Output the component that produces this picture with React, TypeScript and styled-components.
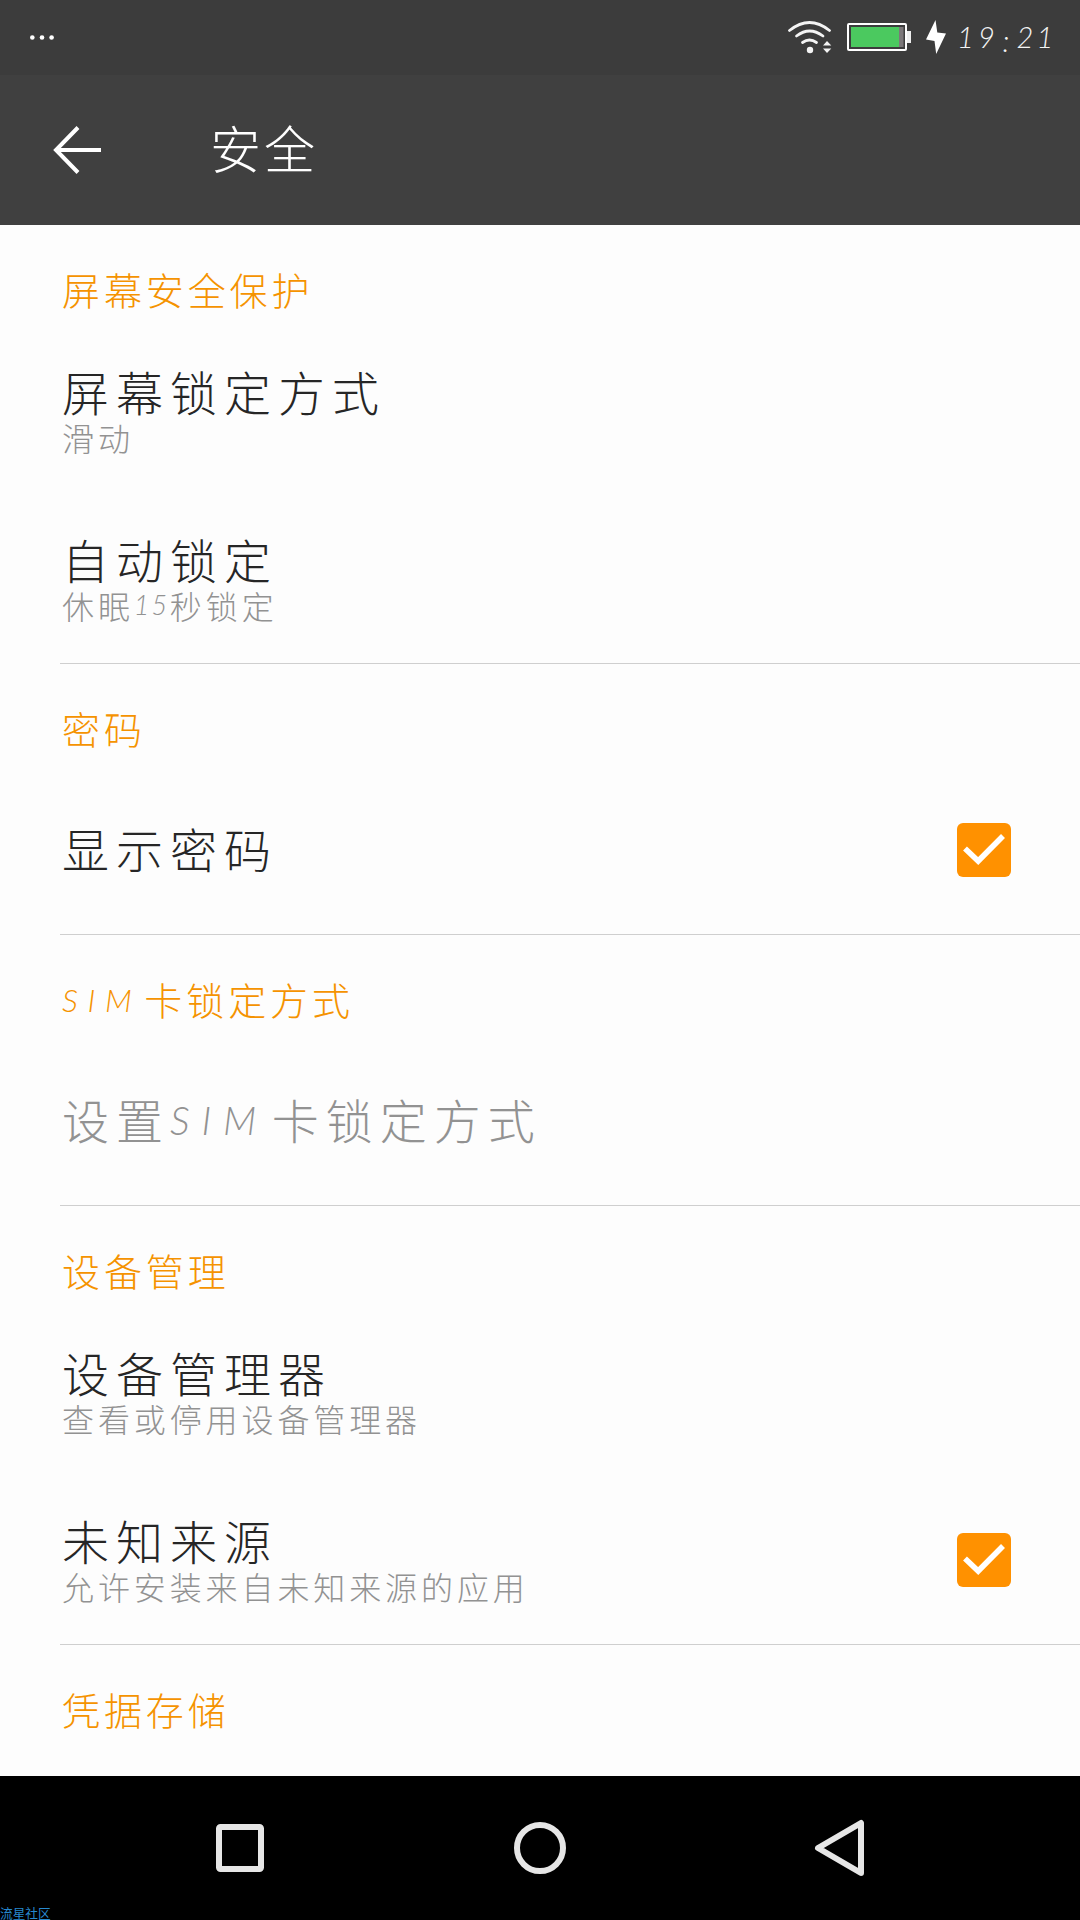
import React from "react";
import styled, { createGlobalStyle } from "styled-components";

const GlobalStyle = createGlobalStyle`
  * { box-sizing: border-box; }
  body { margin: 0; background: #fdfdfd; }
`;

const Screen = styled.div`
  position: relative;
  display: flex;
  flex-direction: column;
  width: 1080px;
  height: 1920px;
  overflow: hidden;
  background: #fdfdfd;
  font-family: Lato, "Noto Sans CJK SC", sans-serif;
  font-weight: 300;
  white-space: nowrap;
`;

const StatusBar = styled.header`
  display: flex;
  align-items: center;
  justify-content: space-between;
  height: 75px;
  flex: none;
  padding: 0 25px 2px 28px;
  background: #3c3c3c;
`;

const StatusIcons = styled.div`
  display: flex;
  align-items: center;
`;

const Clock = styled.div`
  display: flex;
  width: 103px;
  padding-left: 3px;
  font: italic 300 29px/34px Lato, sans-serif;
  color: #f4f4f4;
`;

const Digit = styled.span<{ $width: number; $drop?: number }>`
  width: ${(p) => p.$width}px;
  padding-top: ${(p) => p.$drop ?? 0}px;
  height: 34px;
  text-align: center;
`;

const Toolbar = styled.div`
  display: flex;
  align-items: center;
  height: 150px;
  flex: none;
  padding-left: 53px;
  gap: 109px;
  background: #404040;
`;

const PageTitle = styled.h1`
  margin: 0;
  font-size: 51px;
  font-weight: 300;
  line-height: 60px;
  letter-spacing: 3px;
  color: #fff;
`;

const Content = styled.main`
  flex: 1;
  min-height: 0;
  overflow: hidden;
`;

const Section = styled.section`
  margin-left: 60px;
  border-bottom: 1px solid #cfcfcf;

  &:last-child {
    border-bottom: none;
  }
`;

const SectionTitle = styled.h2`
  height: 102px;
  margin: 0;
  padding: 40px 0 0 2px;
  font-size: 38px;
  font-weight: 300;
  line-height: 50px;
  letter-spacing: 3.9px;
  color: #f59300;
`;

const Item = styled.div`
  display: flex;
  align-items: center;
  justify-content: space-between;
  height: 168px;
  padding: 0 69px 0 2px;
`;

const ItemTitle = styled.div<{ $disabled?: boolean }>`
  font-size: 47px;
  line-height: 56px;
  letter-spacing: 7px;
  color: ${(p) => (p.$disabled ? "#929292" : "#262626")};
`;

const Summary = styled.div`
  font-size: 32px;
  line-height: 36px;
  letter-spacing: 3.9px;
  color: #929292;
`;

const Latin = styled.span<{ $em: number; $tracking: number; $rise: number }>`
  display: inline-block;
  width: ${(p) => p.$em}em;
  font-size: 0.84em;
  font-style: italic;
  line-height: 1;
  letter-spacing: ${(p) => p.$tracking}em;
  vertical-align: ${(p) => p.$rise}em;
`;

const Checkbox = styled.span`
  display: flex;
  width: 54px;
  height: 54px;
  border-radius: 6px;
  background: #ff9100;
`;

const NavBar = styled.nav`
  display: flex;
  align-items: center;
  justify-content: center;
  gap: 240px;
  height: 144px;
  flex: none;
  background: #000;
`;

const Watermark = styled.div`
  position: absolute;
  left: 0;
  bottom: 0;
  font: 400 12.7px/14px "Noto Sans CJK SC", sans-serif;
  color: #2789cf;
`;

const Check = () => (
  <Checkbox>
    <svg width="54" height="54" viewBox="0 0 54 54">
      <path d="M8 25.5 L21.2 38 L46 13" fill="none" stroke="#fff" strokeWidth="5.6" />
    </svg>
  </Checkbox>
);

type Entry = { title: string; summary?: string; disabled?: boolean; checked?: boolean };
type Group = { name: string; items: Entry[] };

const groups: Group[] = [
  {
    name: "屏幕安全保护",
    items: [
      { title: "屏幕锁定方式", summary: "滑动" },
      { title: "自动锁定", summary: "休眠15秒锁定" },
    ],
  },
  { name: "密码", items: [{ title: "显示密码", checked: true }] },
  { name: "SIM卡锁定方式", items: [{ title: "设置SIM卡锁定方式", disabled: true }] },
  {
    name: "设备管理",
    items: [
      { title: "设备管理器", summary: "查看或停用设备管理器" },
      { title: "未知来源", summary: "允许安装来自未知来源的应用", checked: true },
    ],
  },
  { name: "凭据存储", items: [] },
];

/* Sets Latin runs in italics between the Chinese characters. */
const Mixed = ({ text }: { text: string }) => (
  <>
    {text.split(/(SIM|15)/).map((part, i) => {
      if (part === "SIM") {
        return (
          <Latin key={i} $em={2.58} $tracking={0.3} $rise={0.1}>
            {part}
          </Latin>
        );
      }
      if (part === "15") {
        return (
          <Latin key={i} $em={1.34} $tracking={0.08} $rise={0.16}>
            {part}
          </Latin>
        );
      }
      return part;
    })}
  </>
);

export default function App() {
  return (
    <Screen>
      <GlobalStyle />
      <StatusBar>
        <svg width="28" height="8" viewBox="0 0 28 8" fill="#fff">
          <circle cx="4.3" cy="4.5" r="2.3" />
          <circle cx="14" cy="4.5" r="2.3" />
          <circle cx="23.6" cy="4.5" r="2.3" />
        </svg>
        <StatusIcons>
          <svg width="165" height="40" viewBox="787 17 165 40">
            <g fill="none" stroke="#f4f4f4" strokeWidth="2.8" strokeLinecap="round">
              <path d="M789.5 30.5 Q809.5 14.5 829.5 30.5" />
              <path d="M796.5 36 Q809.5 26 823 36" />
              <path d="M802.5 42.5 Q809.5 37.5 816.5 42.5" />
            </g>
            <circle cx="810" cy="50" r="3.2" fill="#f4f4f4" />
            <path d="M823 45.5 L827 41 L831.3 45.5 Z M823 48.5 L827 53 L831.3 48.5 Z" fill="#f4f4f4" />
            <rect x="848" y="24" width="58" height="26" rx="1" fill="none" stroke="#fff" strokeWidth="2" />
            <rect x="851" y="27" width="48" height="20" fill="#4bc95f" />
            <rect x="899" y="27" width="4.5" height="20" fill="#7b7779" />
            <rect x="907" y="31" width="4" height="12" fill="#eee" />
            <path d="M935.5 20 L926 39.5 L934.5 41 L936.2 54 L946 33.5 L937.3 32.5 Z" fill="#fff" />
          </svg>
          <Clock>
            <Digit $width={21}>1</Digit>
            <Digit $width={21}>9</Digit>
            <Digit $width={18} $drop={4}>:</Digit>
            <Digit $width={20}>2</Digit>
            <Digit $width={20}>1</Digit>
          </Clock>
        </StatusIcons>
      </StatusBar>
      <Toolbar>
        <svg width="48" height="50" viewBox="0 0 48 50">
          <path d="M25 2.5 L3 25 L25 47.5 M3 25 H48" fill="none" stroke="#fff" strokeWidth="4" />
        </svg>
        <PageTitle>安全</PageTitle>
      </Toolbar>
      <Content>
        {groups.map((group) => (
          <Section key={group.name}>
            <SectionTitle>
              <Mixed text={group.name} />
            </SectionTitle>
            {group.items.map((item) => (
              <Item key={item.title}>
                <div>
                  <ItemTitle $disabled={item.disabled}>
                    <Mixed text={item.title} />
                  </ItemTitle>
                  {item.summary && (
                    <Summary>
                      <Mixed text={item.summary} />
                    </Summary>
                  )}
                </div>
                {item.checked && <Check />}
              </Item>
            ))}
          </Section>
        ))}
      </Content>
      <NavBar>
        <svg width="60" height="60" viewBox="0 0 60 60" fill="none" stroke="#e6e6e6" strokeWidth="6">
          <rect x="9" y="9" width="42" height="42" rx="1.5" />
        </svg>
        <svg width="60" height="60" viewBox="0 0 60 60" fill="none" stroke="#e6e6e6" strokeWidth="6">
          <circle cx="30" cy="30" r="23" />
        </svg>
        <svg width="60" height="60" viewBox="0 0 60 60" fill="none" stroke="#e6e6e6" strokeWidth="6" strokeLinejoin="round">
          <path d="M51 5 V55 L8 30 Z" />
        </svg>
      </NavBar>
      <Watermark>流星社区</Watermark>
    </Screen>
  );
}
